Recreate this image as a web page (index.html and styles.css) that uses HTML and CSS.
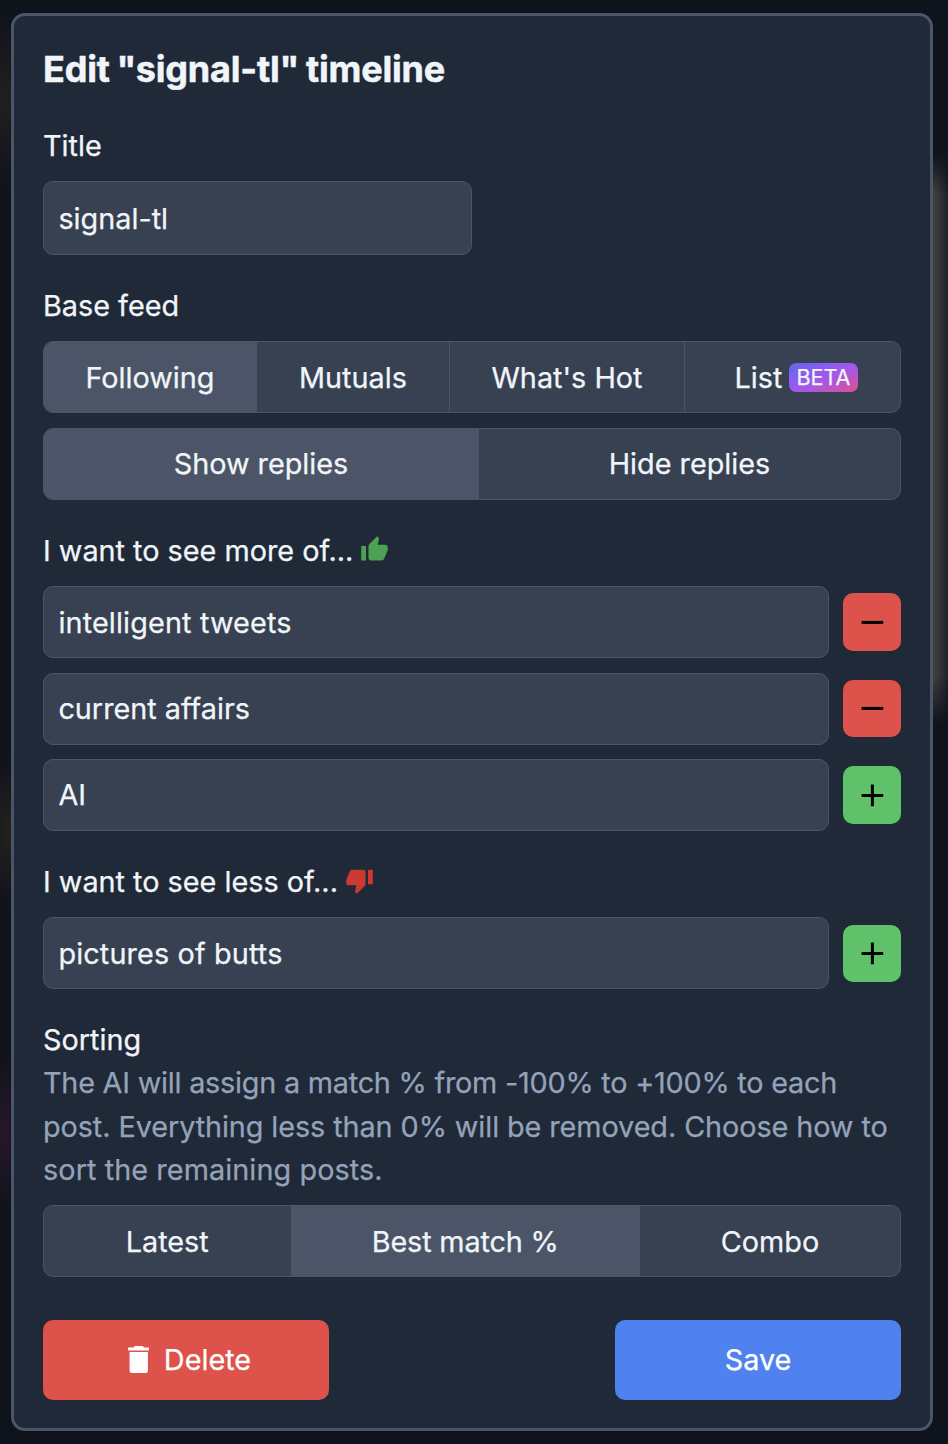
FILE: index.html
```html
<!DOCTYPE html>
<html lang="en">
<head>
<meta charset="utf-8">
<title>Edit timeline</title>
<link rel="stylesheet" href="styles.css">
</head>
<body>
<main class="panel">
  <h1 class="heading">Edit "signal-tl" timeline</h1>

  <section class="section">
    <div class="label">Title</div>
    <div class="field field-title">signal-tl</div>
  </section>

  <section class="section">
    <div class="label">Base feed</div>
    <div class="segments feed">
      <div class="segment active">Following</div>
      <div class="segment">Mutuals</div>
      <div class="segment">What's Hot</div>
      <div class="segment list">List<span class="beta">BETA</span></div>
    </div>
    <div class="segments replies">
      <div class="segment active">Show replies</div>
      <div class="segment">Hide replies</div>
    </div>
  </section>

  <section class="section">
    <div class="label">I want to see more of...
      <svg class="thumb" viewBox="0 0 24 24" fill="#4ca154"><path d="M1 21h4V9H1v12zm22-11c0-1.1-.9-2-2-2h-6.31l.95-4.57.03-.32c0-.41-.17-.79-.44-1.06L14.17 1 7.59 7.59C7.22 7.95 7 8.45 7 9v10c0 1.1.9 2 2 2h9c.83 0 1.54-.5 1.84-1.22l3.02-7.05c.09-.23.14-.47.14-.73v-2z"/></svg>
    </div>
    <div class="row">
      <div class="field wide">intelligent tweets</div>
      <div class="square red"><svg viewBox="0 0 24 24"><path d="M3 12h18" /></svg></div>
    </div>
    <div class="row">
      <div class="field">current affairs</div>
      <div class="square red"><svg viewBox="0 0 24 24"><path d="M3 12h18" /></svg></div>
    </div>
    <div class="row">
      <div class="field">AI</div>
      <div class="square green"><svg viewBox="0 0 24 24"><path d="M3 12h18M12 3v18" /></svg></div>
    </div>
  </section>

  <section class="section">
    <div class="label">I want to see less of...
      <svg class="thumb down" viewBox="0 0 24 24" fill="#cb3a31"><path d="M15 3H6c-.83 0-1.54.5-1.84 1.22l-3.02 7.05c-.09.23-.14.47-.14.73v2c0 1.1.9 2 2 2h6.31l-.95 4.57-.03.32c0 .41.17.79.44 1.06L9.83 23l6.59-6.59c.36-.36.58-.86.58-1.41V5c0-1.1-.9-2-2-2zm4 0v12h4V3h-4z"/></svg>
    </div>
    <div class="row">
      <div class="field wide">pictures of butts</div>
      <div class="square green"><svg viewBox="0 0 24 24"><path d="M3 12h18M12 3v18" /></svg></div>
    </div>
  </section>

  <section class="section">
    <div class="sorting">
      <div class="label">Sorting</div>
      <p class="description">
        <span class="line line-tight">The AI will assign a match % from -100% to +100% to each</span>
        <span class="line line-snug">post. Everything less than 0% will be removed. Choose how to</span>
        <span class="line line-loose">sort the remaining posts.</span>
      </p>
    </div>
    <div class="segments sort">
      <div class="segment">Latest</div>
      <div class="segment active best">Best match %</div>
      <div class="segment">Combo</div>
    </div>
  </section>

  <footer class="actions">
    <div class="button delete">
      <svg class="trash" viewBox="5 3 14 18" fill="#fff"><path d="M6 19c0 1.1.9 2 2 2h8c1.1 0 2-.9 2-2V7H6v12zM19 4h-3.500l-1-1h-5l-1 1H5v2h14V4z"/></svg>
      Delete
    </div>
    <div class="button save">Save</div>
  </footer>
</main>
</body>
</html>
```
FILE: styles.css
```css
* {
  box-sizing: border-box;
}

body {
  margin: 0;
  height: 1444px;
  padding: 13px 15px 13px 11px;
  overflow: hidden;
  font: 400 28.8px/43.2px Inter, sans-serif;
  -webkit-text-stroke: 0.25px currentColor;
  color: #f1f5f9;
  background:
    radial-gradient(ellipse 30px 90px at 4px 100px, #211f20, transparent),
    radial-gradient(ellipse 30px 75px at 8px 832px, #24211f, transparent),
    radial-gradient(ellipse 24px 80px at 5px 1132px, #26172a, transparent),
    linear-gradient(to bottom, #0f131b 155px, transparent 195px, transparent 675px, #0f131b 725px),
    linear-gradient(to right, #0f131b 930px, #414143 933px, #38393b 938px, #1d2027 948px);
}

.panel {
  height: 1418px;
  padding: 29px 29px 28px;
  border: 3px solid #4b5567;
  border-radius: 14px;
  background: #202938;
}

.heading {
  margin: 0;
  height: 50px;
  font-size: 36px;
  font-weight: 700;
  line-height: 48px;
  letter-spacing: -0.2px;
  word-spacing: -1.6px;
  -webkit-text-stroke-width: 0.5px;
}

.section {
  display: flex;
  flex-direction: column;
  gap: 14.4px;
  margin-top: 28.8px;
}

.label {
  display: flex;
  align-items: center;
  gap: 7px;
  height: 43.2px;
}

.thumb {
  width: 29px;
  height: 29px;
  position: relative;
  top: -1px;
}

.field {
  flex: 1;
  height: 72px;
  padding: 0 14.4px;
  line-height: 70px;
  border: 1px solid #4b5567;
  border-radius: 10px;
  background: #374151;
}

.wide {
  line-height: 71px;
  letter-spacing: 0.14px;
}

.field-title {
  flex: none;
  width: 50%;
  height: 73.65px;
  line-height: 73px;
}

.row {
  display: flex;
  align-items: center;
  gap: 14.4px;
}

.square {
  display: grid;
  place-items: center;
  width: 57.6px;
  height: 57.6px;
  border-radius: 10px;
}

.square svg {
  width: 28.8px;
  height: 28.8px;
  fill: none;
  stroke: #000;
  stroke-width: 2.5;
}

.red,
.delete {
  background: #de524c;
}

.green {
  background: #5fc26a;
}

.segments {
  display: grid;
  height: 72px;
  border: 1px solid #4b5567;
  border-radius: 10px;
  overflow: hidden;
  background: #374151;
}

.feed {
  grid-template-columns: 213px 193px 235px 1fr;
}

.replies {
  grid-template-columns: 435px 1fr;
}

.sort {
  grid-template-columns: 247.5px 348.5px 1fr;
}

.segment {
  display: flex;
  align-items: center;
  justify-content: center;
  border-right: 1px solid #4b5567;
}

.segment:last-child {
  border-right: 0;
}

.list {
  padding-left: 7px;
}

.active {
  background: #4b5567;
}

.best {
  letter-spacing: -0.15px;
}

.beta {
  margin-left: 7px;
  padding: 0 7px;
  height: 29px;
  font-size: 21.6px;
  line-height: 29px;
  border-radius: 7px;
  background: linear-gradient(to bottom right, #6366e9, #a058f0 50%, #db5292);
}

.description {
  margin: 0;
  color: #94a3b8;
}

.line {
  display: block;
  white-space: nowrap;
}

.line-tight {
  letter-spacing: -0.22px;
}

.line-snug {
  letter-spacing: -0.08px;
}

.line-loose {
  letter-spacing: 0.08px;
}

.actions {
  display: flex;
  justify-content: space-between;
  margin-top: 42.7px;
}

.button {
  display: flex;
  align-items: center;
  justify-content: center;
  width: 286px;
  height: 80px;
  padding-bottom: 1px;
  border-radius: 10px;
  color: #fff;
}

.delete {
  padding-left: 7px;
}

.trash {
  width: 21.5px;
  height: 27.5px;
  margin-right: 14.5px;
}

.save {
  background: #4f82ee;
}
```
